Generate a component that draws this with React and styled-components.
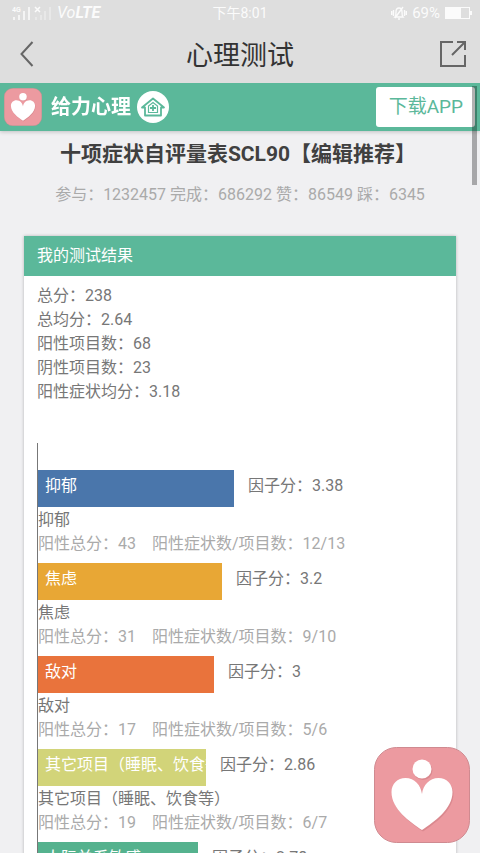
import React from 'react'
import styled, { createGlobalStyle } from 'styled-components'

const GREEN = '#5bb89a'

const GlobalStyle = createGlobalStyle`
  * {
    box-sizing: border-box;
  }

  body {
    margin: 0;
    background: #f0f0f2;
    color: #777;
    font-family: Roboto, 'Noto Sans CJK SC', sans-serif;
    font-size: 16px;
    line-height: 24px;
  }

  h1, h2, h3, p, ul, ol, dl, dd {
    margin: 0;
    padding: 0;
    font-weight: 400;
  }

  button {
    padding: 0;
    border: 0;
    background: none;
    font: inherit;
    cursor: pointer;
  }

  svg {
    display: block;
  }
`

const Screen = styled.div`
  position: relative;
  display: flex;
  flex-direction: column;
  height: 100vh;
  overflow: hidden;
`

const TopBar = styled.header`
  background: #dedede;
`

const StatusBar = styled.div`
  display: grid;
  grid-template-columns: 1fr auto 1fr;
  align-items: center;
  height: 25px;
  padding: 0 8px;
  color: #fbfbfb;
  font-size: 14px;
`

const StatusGroup = styled.div`
  display: flex;
  align-items: center;
  justify-content: ${props => props.$end ? 'flex-end' : 'flex-start'};
  gap: 5px;
  padding-left: 4px;
  font-size: 15px;
`

const Volte = styled.span`
  font-size: 16px;
  font-style: italic;

  b {
    font-weight: 700;
  }
`

const NavBar = styled.div`
  display: grid;
  grid-template-columns: 26px 1fr 26px;
  align-items: center;
  height: 58px;
  padding: 0 14px;
`

const NavButton = styled.button`
  display: flex;
  justify-content: center;
  color: #666;
`

const NavTitle = styled.h1`
  padding-top: 3px;
  color: #333;
  font-size: 27px;
  line-height: 36px;
  text-align: center;
`

const Content = styled.div`
  flex: 1;
  min-height: 0;
  overflow-y: auto;
  scrollbar-width: none;
`

const BrandBar = styled.div`
  position: sticky;
  top: 0;
  display: flex;
  align-items: center;
  height: 48px;
  padding: 0 5px 0 4px;
  background: ${GREEN};
  box-shadow: 0 1px 4px rgba(0, 0, 0, .2);
`

const BrandLink = styled.a`
  display: flex;
  align-items: center;
  color: #fff;
  font-size: 20px;
  font-weight: 700;
  text-decoration: none;
`

const BrandName = styled.span`
  margin: 0 6px 0 9px;
`

const DownloadButton = styled.button`
  height: 40px;
  margin-left: auto;
  padding: 0 12px 1px 13px;
  border-radius: 3px;
  background: #fff;
  color: ${GREEN};
  font-size: 19px;
`

const ScrollThumb = styled.div`
  position: absolute;
  top: 86px;
  right: 3px;
  width: 5px;
  height: 99px;
  background: rgba(0, 0, 0, .3);
`

const PageTitle = styled.h2`
  padding: 9px 4px 0 0;
  color: #404040;
  font-size: 21px;
  font-weight: 700;
  line-height: 28px;
  text-align: center;
`

const Meta = styled.p`
  margin-top: 15px;
  color: #aaa;
  text-align: center;
`

const Card = styled.section`
  margin: 29px 24px 24px;
  background: #fff;
  box-shadow: 0 0 3px rgba(0, 0, 0, .25);
`

const CardTitle = styled.h3`
  padding: 8px 13px;
  background: ${GREEN};
  color: #fff;
  font-size: 16px;
`

const Summary = styled.dl`
  padding: 8px 13px 0;
`

const SummaryRow = styled.div`
  display: flex;
`

const Chart = styled.ol`
  margin: 39px 18px 0 13px;
  padding: 27px 0 24px;
  border-left: 1px solid #777;
  list-style: none;
`

const Factor = styled.li`
  margin-bottom: 7px;
`

const BarLine = styled.div`
  display: flex;
  gap: 14px;
  height: 37px;
  margin-bottom: 1px;
  line-height: 31px;
`

const Bar = styled.div`
  flex: none;
  padding-left: 7px;
  overflow: hidden;
  background: ${props => props.$color};
  color: #fff;
  white-space: nowrap;
`

const FactorDetail = styled.p`
  display: flex;
  gap: 16px;
  color: #aaa;
`

const FloatingButton = styled.button`
  position: absolute;
  right: 10px;
  bottom: 10px;
`

const SUMMARY = [
  ['总分', '238'],
  ['总均分', '2.64'],
  ['阳性项目数', '68'],
  ['阴性项目数', '23'],
  ['阳性症状均分', '3.18']
]

const FACTORS = [
  { name: '抑郁', score: '3.38', width: 49, color: '#4a76ab', total: 43, items: '12/13' },
  { name: '焦虑', score: '3.2', width: 46, color: '#e8a735', total: 31, items: '9/10' },
  { name: '敌对', score: '3', width: 44, color: '#e9733c', total: 17, items: '5/6' },
  { name: '其它项目（睡眠、饮食等）', score: '2.86', width: 42, color: '#d2d479', total: 19, items: '6/7' },
  { name: '人际关系敏感', score: '2.78', width: 40, color: '#55b28e', total: 23, items: '8/9' }
]

const HEART = 'M48 83C36 75 17.500 62 17.500 45c0-8 6-14 14-14 9 0 15.500 7 16.500 16 1-9 7.500-16 16.500-16 8 0 14 6 14 14 0 17-18.500 30-30.500 38z'

function HeartLogo ({ size }) {
  return (
    <svg width={size} height={size} viewBox="0 0 96 96" aria-hidden="true">
      <rect x="0.5" y="0.5" width="95" height="95" rx="22" fill="#ec9aa0" stroke="#cf8a90" />
      <g fill="#b9686f" opacity=".35" transform="translate(1 1.500)">
        <circle cx="48" cy="22" r="9.500" />
        <path d={HEART} />
      </g>
      <g fill="#fff">
        <circle cx="48" cy="22" r="9.500" />
        <path d={HEART} />
      </g>
    </svg>
  )
}

function HomeBadge () {
  return (
    <svg width="32" height="32" viewBox="0 0 32 32" fill="none" stroke={GREEN} aria-hidden="true">
      <circle cx="16" cy="16" r="16" fill="#fff" stroke="none" />
      <path d="M5 16.500L16 7.500l11 9h-3v8H8v-8z" strokeWidth="1.800" strokeLinejoin="round" />
      <path d="M11.500 21.500V15l4.500-3.500 4.500 3.500v6.500z" strokeWidth="1.200" />
      <path d="M16 14v6M13 17h6" strokeWidth="1.800" />
    </svg>
  )
}

function SignalIcon () {
  return (
    <svg width="40" height="14" viewBox="0 0 40 14" aria-hidden="true">
      <text x="0" y="6" fontSize="7" fontWeight="700" fill="#fbfbfb">4G</text>
      <path d="M2 14v-3M7 14V9M12 14V5M17 14V1" stroke="#f4f4f4" strokeWidth="2" />
      <path d="M24 14v-3M29 14V9M33 14V5M38 14V1" stroke="#e8e8e8" strokeWidth="2" />
      <path d="M23 1l5 5M28 1l-5 5" stroke="#fbfbfb" strokeWidth="1.500" />
    </svg>
  )
}

function MuteIcon () {
  return (
    <svg width="16" height="14" viewBox="0 0 16 14" fill="none" stroke="#fbfbfb" strokeWidth="1.400" aria-hidden="true">
      <path d="M4 11h8c-1-1-1-2-1-5 0-3-1-4-3-4S5 3 5 6c0 3 0 4-1 5zM7 13h2M4 12L12 1M2.500 4v6M13.500 4v6M.700 5v4M15.300 5v4" />
    </svg>
  )
}

function BatteryIcon () {
  return (
    <svg width="27" height="12" viewBox="0 0 27 12" aria-hidden="true">
      <rect x=".5" y=".5" width="24" height="11" fill="none" stroke="#fbfbfb" />
      <path d="M1 1h15v10H1zM25 4h2v4h-2z" fill="#fbfbfb" />
    </svg>
  )
}

function FactorItem ({ name, score, width, color, total, items }) {
  return (
    <Factor>
      <BarLine>
        <Bar $color={color} style={{ width: `${width}%` }}>{name}</Bar>
        <span>因子分：{score}</span>
      </BarLine>
      <p>{name}</p>
      <FactorDetail>
        <span>阳性总分：{total}</span>
        <span>阳性症状数/项目数：{items}</span>
      </FactorDetail>
    </Factor>
  )
}

export default function App () {
  return (
    <Screen>
      <GlobalStyle />
      <TopBar>
        <StatusBar>
          <StatusGroup>
            <SignalIcon />
            <Volte>Vo<b>LTE</b></Volte>
          </StatusGroup>
          <span>下午8:01</span>
          <StatusGroup $end>
            <MuteIcon />
            <span>69%</span>
            <BatteryIcon />
          </StatusGroup>
        </StatusBar>
        <NavBar>
          <NavButton aria-label="返回">
            <svg width="14" height="26" viewBox="0 0 14 26" fill="none" stroke="currentColor" strokeWidth="2">
              <path d="M12.500 1L1.500 13l11 12" />
            </svg>
          </NavButton>
          <NavTitle>心理测试</NavTitle>
          <NavButton aria-label="分享">
            <svg width="26" height="26" viewBox="0 0 26 26" fill="none" stroke="currentColor" strokeWidth="2">
              <path d="M13 1H1v24h24V14M17 1h8v8M25 1L12 14" />
            </svg>
          </NavButton>
        </NavBar>
      </TopBar>

      <Content>
        <BrandBar>
          <BrandLink href="#home">
            <HeartLogo size={38} />
            <BrandName>给力心理</BrandName>
            <HomeBadge />
          </BrandLink>
          <DownloadButton>下载APP</DownloadButton>
        </BrandBar>
        <PageTitle>十项症状自评量表SCL90【编辑推荐】</PageTitle>
        <Meta>参与：1232457 完成：686292 赞：86549 踩：6345</Meta>
        <Card>
          <CardTitle>我的测试结果</CardTitle>
          <Summary>
            {SUMMARY.map(([label, value]) => (
              <SummaryRow key={label}>
                <dt>{label}：</dt>
                <dd>{value}</dd>
              </SummaryRow>
            ))}
          </Summary>
          <Chart>
            {FACTORS.map(factor => <FactorItem key={factor.name} {...factor} />)}
          </Chart>
        </Card>
      </Content>

      <ScrollThumb />
      <FloatingButton aria-label="给力心理">
        <HeartLogo size={96} />
      </FloatingButton>
    </Screen>
  )
}
